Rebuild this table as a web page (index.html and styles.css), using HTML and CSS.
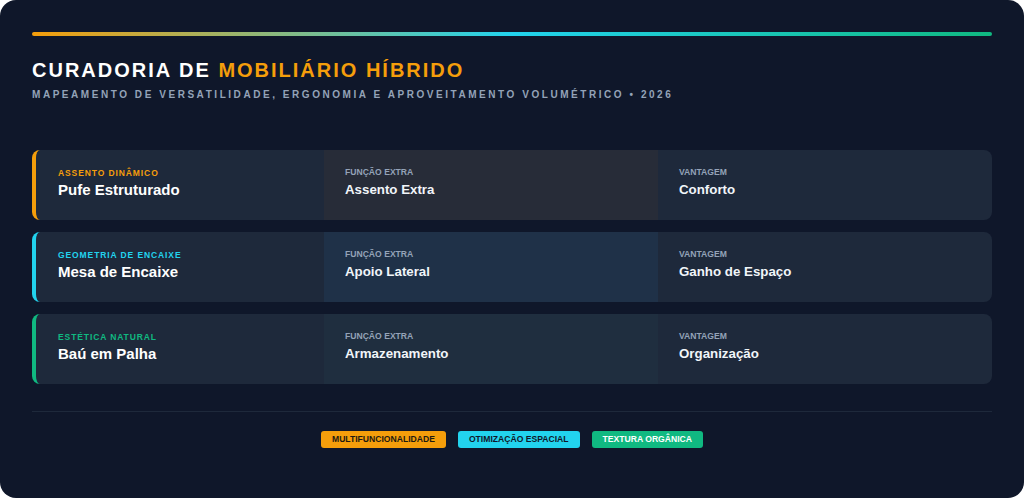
FILE: index.html
```html
<!DOCTYPE html>
<html lang="pt">
<head>
<meta charset="utf-8">
<title>Curadoria de Mobiliário Híbrido</title>
<link rel="stylesheet" href="styles.css">
</head>
<body>
<main class="page">
  <div class="accent-bar"></div>
  <header class="header">
    <h1 class="title">CURADORIA DE <span class="title-hl">MOBILIÁRIO HÍBRIDO</span></h1>
    <p class="subtitle">MAPEAMENTO DE VERSATILIDADE, ERGONOMIA E APROVEITAMENTO VOLUMÉTRICO • 2026</p>
  </header>

  <section class="rows">
    <div class="row row-amber">
      <div class="cell cell-main">
        <span class="tagline">ASSENTO DINÂMICO</span>
        <span class="name">Pufe Estruturado</span>
      </div>
      <div class="cell cell-mid">
        <span class="label">FUNÇÃO EXTRA</span>
        <span class="value">Assento Extra</span>
      </div>
      <div class="cell">
        <span class="label">VANTAGEM</span>
        <span class="value">Conforto</span>
      </div>
    </div>

    <div class="row row-cyan">
      <div class="cell cell-main">
        <span class="tagline">GEOMETRIA DE ENCAIXE</span>
        <span class="name">Mesa de Encaixe</span>
      </div>
      <div class="cell cell-mid">
        <span class="label">FUNÇÃO EXTRA</span>
        <span class="value">Apoio Lateral</span>
      </div>
      <div class="cell">
        <span class="label">VANTAGEM</span>
        <span class="value">Ganho de Espaço</span>
      </div>
    </div>

    <div class="row row-green">
      <div class="cell cell-main">
        <span class="tagline">ESTÉTICA NATURAL</span>
        <span class="name">Baú em Palha</span>
      </div>
      <div class="cell cell-mid">
        <span class="label">FUNÇÃO EXTRA</span>
        <span class="value">Armazenamento</span>
      </div>
      <div class="cell">
        <span class="label">VANTAGEM</span>
        <span class="value">Organização</span>
      </div>
    </div>
  </section>

  <footer class="footer">
    <span class="chip chip-amber">MULTIFUNCIONALIDADE</span>
    <span class="chip chip-cyan">OTIMIZAÇÃO ESPACIAL</span>
    <span class="chip chip-green">TEXTURA ORGÂNICA</span>
  </footer>
</main>
</body>
</html>
```

FILE: styles.css
```css
* { box-sizing: border-box; }

html, body {
  margin: 0;
  padding: 0;
  background: #ffffff;
}

body {
  font-family: "Liberation Sans", Arial, sans-serif;
  color: #f8fafc;
}

.page {
  width: 1024px;
  height: 498px;
  background: #0f172a;
  border-radius: 16px;
  padding: 32px;
  display: flex;
  flex-direction: column;
  overflow: hidden;
}

.accent-bar {
  height: 4px;
  border-radius: 2px;
  background: linear-gradient(90deg, #f59e0b 0%, #22d3ee 50%, #10b981 100%);
}

.header {
  margin-top: 22px;
}

.title {
  margin: 0;
  font-size: 20px;
  line-height: 24px;
  font-weight: 700;
  letter-spacing: 2px;
  color: #ffffff;
}

.title-hl { color: #f59e0b; }

.subtitle {
  margin: 6px 0 0;
  font-size: 10px;
  line-height: 14px;
  font-weight: 700;
  letter-spacing: 2.55px;
  color: #94a3b8;
}

.rows {
  margin-top: 48px;
  display: flex;
  flex-direction: column;
  gap: 12px;
}

.row {
  display: grid;
  grid-template-columns: 288fr 334fr 334fr;
  height: 70px;
  background: #1e293b;
  border-radius: 8px;
  border-left: 4px solid #f59e0b;
  overflow: hidden;
}

.row-cyan { border-left-color: #22d3ee; }
.row-green { border-left-color: #10b981; }

.cell {
  display: flex;
  flex-direction: column;
  justify-content: center;
  gap: 2px;
  padding: 0 20px 5px 21px;
}

.cell-main { padding-left: 22px; }

.row-amber .cell-mid { background: #272c38; }
.row-cyan .cell-mid { background: #1f3148; }
.row-green .cell-mid { background: #1f2e3f; }

.tagline {
  font-size: 8.5px;
  line-height: 11px;
  font-weight: 700;
  letter-spacing: 0.9px;
  color: #f59e0b;
}

.row-cyan .tagline { color: #22d3ee; }
.row-green .tagline { color: #10b981; }

.name {
  font-size: 15px;
  line-height: 17px;
  font-weight: 700;
  color: #ffffff;
}

.label {
  font-size: 8.6px;
  line-height: 11px;
  font-weight: 700;
  color: #94a3b8;
}

.value {
  margin-top: 2px;
  font-size: 13.3px;
  line-height: 16px;
  font-weight: 700;
  color: #f1f5f9;
}

.footer {
  margin-top: 27px;
  border-top: 1px solid #1e293b;
  padding-top: 19px;
  display: flex;
  justify-content: center;
  gap: 12px;
}

.chip {
  font-size: 8.6px;
  line-height: 17px;
  height: 17px;
  font-weight: 700;
  padding: 0 11px;
  border-radius: 3px;
}

.chip-amber { background: #f59e0b; color: #1f1a10; }
.chip-cyan { background: #22d3ee; color: #0f172a; }
.chip-green { background: #10b981; color: #ffffff; }
```
